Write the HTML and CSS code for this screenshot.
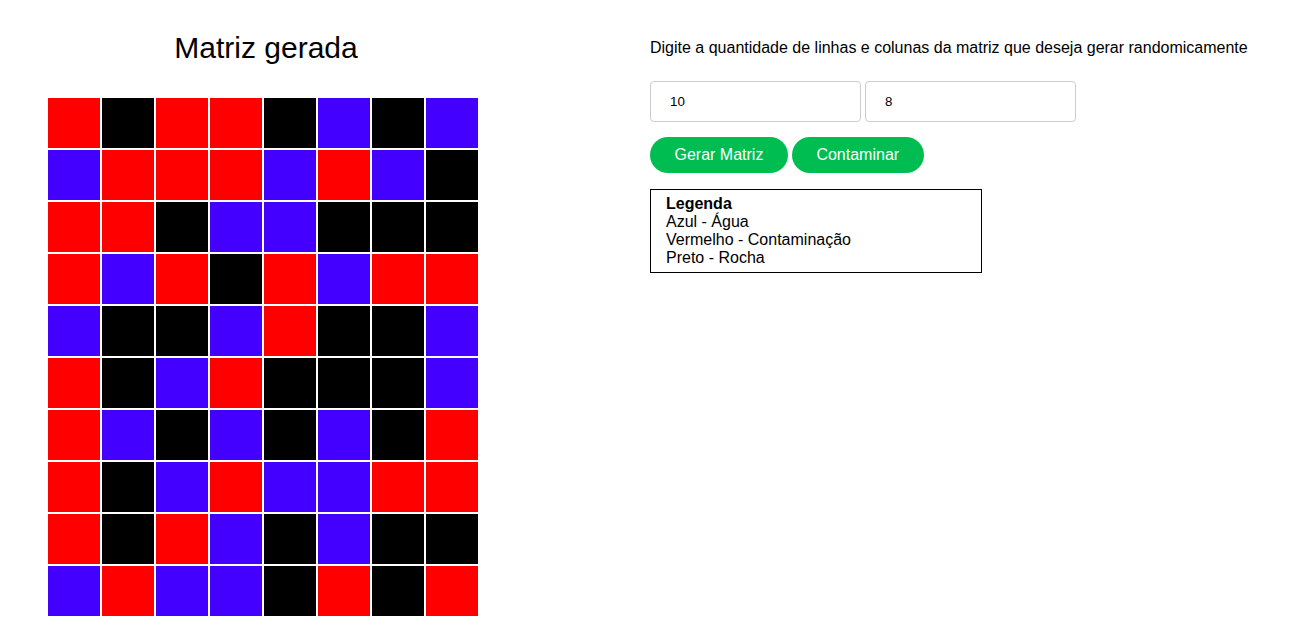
FILE: index.html
```html
<!DOCTYPE html>
<html lang="pt-BR">
<head>
<meta charset="utf-8">
<title>Matriz</title>
<link rel="stylesheet" href="styles.css">
</head>
<body>
<div class="page">
  <section class="left">
    <h1 class="title">Matriz gerada</h1>
    <div class="grid">
      <div class="c r"></div><div class="c k"></div><div class="c r"></div><div class="c r"></div><div class="c k"></div><div class="c b"></div><div class="c k"></div><div class="c b"></div>
      <div class="c b"></div><div class="c r"></div><div class="c r"></div><div class="c r"></div><div class="c b"></div><div class="c r"></div><div class="c b"></div><div class="c k"></div>
      <div class="c r"></div><div class="c r"></div><div class="c k"></div><div class="c b"></div><div class="c b"></div><div class="c k"></div><div class="c k"></div><div class="c k"></div>
      <div class="c r"></div><div class="c b"></div><div class="c r"></div><div class="c k"></div><div class="c r"></div><div class="c b"></div><div class="c r"></div><div class="c r"></div>
      <div class="c b"></div><div class="c k"></div><div class="c k"></div><div class="c b"></div><div class="c r"></div><div class="c k"></div><div class="c k"></div><div class="c b"></div>
      <div class="c r"></div><div class="c k"></div><div class="c b"></div><div class="c r"></div><div class="c k"></div><div class="c k"></div><div class="c k"></div><div class="c b"></div>
      <div class="c r"></div><div class="c b"></div><div class="c k"></div><div class="c b"></div><div class="c k"></div><div class="c b"></div><div class="c k"></div><div class="c r"></div>
      <div class="c r"></div><div class="c k"></div><div class="c b"></div><div class="c r"></div><div class="c b"></div><div class="c b"></div><div class="c r"></div><div class="c r"></div>
      <div class="c r"></div><div class="c k"></div><div class="c r"></div><div class="c b"></div><div class="c k"></div><div class="c b"></div><div class="c k"></div><div class="c k"></div>
      <div class="c b"></div><div class="c r"></div><div class="c b"></div><div class="c b"></div><div class="c k"></div><div class="c r"></div><div class="c k"></div><div class="c r"></div>
    </div>
  </section>
  <section class="right">
    <p class="desc">Digite a quantidade de linhas e colunas da matriz que deseja gerar randomicamente</p>
    <div class="inputs">
      <input class="field" type="text" value="10">
      <input class="field" type="text" value="8">
    </div>
    <div class="buttons">
      <button class="btn">Gerar Matriz</button>
      <button class="btn">Contaminar</button>
    </div>
    <div class="legend">
      <div class="legend-title">Legenda</div>
      <div>Azul - Água</div>
      <div>Vermelho - Contaminação</div>
      <div>Preto - Rocha</div>
    </div>
  </section>
</div>
</body>
</html>
```

FILE: styles.css
```css
html, body {
  margin: 0;
  padding: 0;
  background: #fff;
}
body {
  font-family: "Liberation Sans", Arial, sans-serif;
  color: #000;
}
.page {
  display: flex;
  align-items: flex-start;
}
.left {
  padding: 31px 0 0 48px;
  width: 430px;
}
.title {
  margin: 0 0 33px;
  font-size: 30px;
  line-height: 34px;
  font-weight: normal;
  text-align: center;
  position: relative;
  left: 3px;
}
.grid {
  display: grid;
  grid-template-columns: repeat(8, 52px);
  grid-auto-rows: 50px;
  gap: 2px;
}
.c.r { background: #ff0000; }
.c.k { background: #000000; }
.c.b { background: #4400ff; }
.right {
  margin-left: 172px;
  padding-top: 39px;
}
.desc {
  margin: 0 0 24px;
  font-size: 16px;
  line-height: 18px;
}
.inputs {
  display: flex;
  gap: 4px;
}
.field {
  box-sizing: border-box;
  width: 211px;
  height: 41px;
  border: 1px solid #cccccc;
  border-radius: 4px;
  padding: 0 0 0 19px;
  font-family: "Liberation Sans", Arial, sans-serif;
  font-size: 13.33px;
  color: #000;
  outline: none;
  margin: 0;
}
.buttons {
  display: flex;
  gap: 4px;
  margin-top: 15px;
}
.btn {
  height: 36px;
  padding: 0 24.5px;
  border: none;
  border-radius: 18px;
  background: #00bd51;
  color: #fff;
  font-family: "Liberation Sans", Arial, sans-serif;
  font-size: 16px;
  margin: 0;
}
.legend {
  margin-top: 16px;
  box-sizing: border-box;
  width: 332px;
  border: 1px solid #000;
  padding: 5px 15px 5px;
  font-size: 16px;
  line-height: 18px;
}
.legend-title {
  font-weight: bold;
}
```
